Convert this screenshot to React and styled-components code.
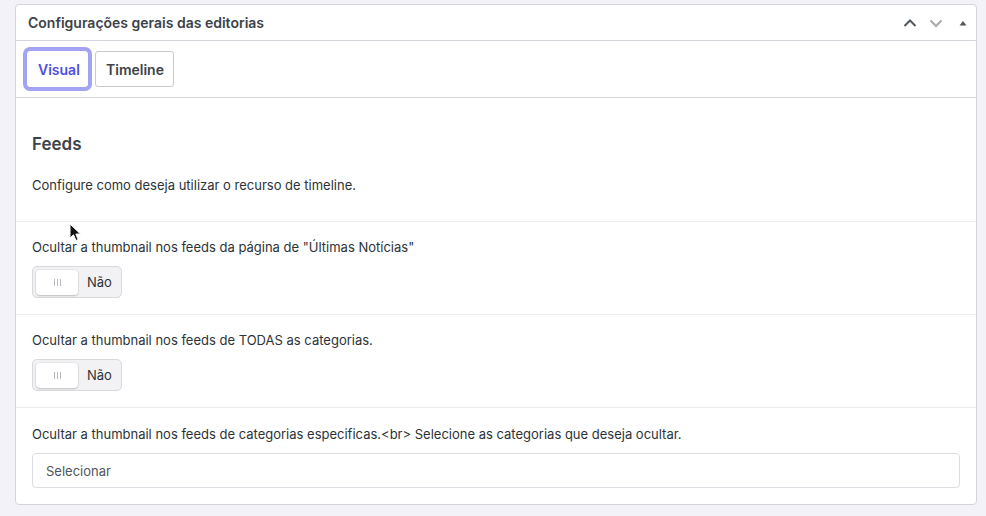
import React from "react";
import styled, { createGlobalStyle } from "styled-components";

const GlobalStyle = createGlobalStyle`
  html, body {
    margin: 0;
    padding: 0;
    background: #f2f2f8;
    font-family: Inter, "Noto Sans", "Liberation Sans", sans-serif;
    -webkit-font-smoothing: antialiased;
  }
`;

const fields = [
  { label: 'Ocultar a thumbnail nos feeds da página de "Últimas Notícias"', kind: "toggle" },
  { label: "Ocultar a thumbnail nos feeds de TODAS as categorias.", kind: "toggle" },
  {
    label:
      "Ocultar a thumbnail nos feeds de categorias especificas.<br> Selecione as categorias que deseja ocultar.",
    kind: "select",
  },
];

const ChevronUp = ({ color }) => (
  <svg width="16" height="16" viewBox="0 0 16 16">
    <path d="M2.5 11 L8 5.5 L13.5 11" fill="none" stroke={color} strokeWidth="2" />
  </svg>
);

const ChevronDown = ({ color }) => (
  <svg width="16" height="16" viewBox="0 0 16 16">
    <path d="M2.5 5.5 L8 11 L13.5 5.5" fill="none" stroke={color} strokeWidth="2" />
  </svg>
);

const Triangle = () => (
  <svg width="10" height="10" viewBox="0 0 10 10">
    <path d="M1.5 7.5 L5 3 L8.5 7.5 Z" fill="#50575e" />
  </svg>
);

const Toggle = () => (
  <ToggleBox>
    <Thumb>
      <Grip />
      <Grip />
      <Grip />
    </Thumb>
    <ToggleText>Não</ToggleText>
  </ToggleBox>
);

const App = () => {
  return (
    <>
      <GlobalStyle />
      <Page>
        <Panel>
          <Header>
            <Title>Configurações gerais das editorias</Title>
            <Actions>
              <ChevronUp color="#50575e" />
              <ChevronDown color="#a7aaad" />
              <Triangle />
            </Actions>
          </Header>
          <TabBar>
            <Tab active>Visual</Tab>
            <Tab>Timeline</Tab>
          </TabBar>
          <Intro>
            <Heading>Feeds</Heading>
            <Description>Configure como deseja utilizar o recurso de timeline.</Description>
          </Intro>
          {fields.map((f) => (
            <Field key={f.label}>
              <Label>{f.label}</Label>
              {f.kind === "toggle" ? <Toggle /> : <Select>Selecionar</Select>}
            </Field>
          ))}
        </Panel>
        <Cursor width="14" height="20" viewBox="0 0 14 20">
          <path
            d="M1 1 L1 15 L4.5 11.8 L7 17.5 L9.2 16.5 L6.8 11 L11.5 11 Z"
            fill="#111"
            stroke="#fff"
            strokeWidth="1"
          />
        </Cursor>
      </Page>
    </>
  );
};

const Page = styled.div`
  position: relative;
  padding: 4px 9px 0 15px;
  height: 512px;
`;

const Panel = styled.div`
  width: 960px;
  background: #fff;
  border: 1px solid #d4d4da;
  border-radius: 4px;
  color: #2c3338;
`;

const Header = styled.div`
  display: flex;
  align-items: center;
  justify-content: space-between;
  height: 35px;
  padding: 0 8px 0 12px;
  border-bottom: 1px solid #d4d4da;
`;

const Title = styled.h2`
  margin: 0;
  font-size: 14px;
  font-weight: 600;
  color: #3c434a;
`;

const Actions = styled.div`
  display: flex;
  align-items: center;
  gap: 10px;

  svg:last-child {
    margin-left: 4px;
  }
`;

const TabBar = styled.div`
  display: flex;
  gap: 3px;
  padding: 10px 8px;
  border-bottom: 1px solid #d4d4da;
`;

const Tab = styled.button`
  height: 36px;
  padding: 0 10px;
  box-sizing: border-box;
  font-family: inherit;
  font-size: 14px;
  font-weight: 600;
  background: #fff;
  border: 1px solid ${(p) => (p.active ? "#fff" : "#c9c9ce")};
  border-radius: 3px;
  color: ${(p) => (p.active ? "#4f4fe0" : "#3c434a")};
  box-shadow: ${(p) => (p.active ? "0 0 0 4px #a3a3f3" : "none")};
  margin-left: ${(p) => (p.active ? "3px" : "0")};
  margin-right: ${(p) => (p.active ? "4px" : "0")};
  width: ${(p) => (p.active ? "61px" : "79px")};
`;

const Intro = styled.div`
  padding: 34px 16px 27px;
  border-bottom: 1px solid #ececf0;
`;

const Heading = styled.h3`
  margin: 0 0 20px;
  font-size: 17px;
  font-weight: 600;
  color: #3c434a;
  line-height: 24px;
`;

const Description = styled.p`
  margin: 0;
  font-size: 13px;
  line-height: 18px;
  color: #2c3338;
`;

const Field = styled.div`
  display: flex;
  flex-direction: column;
  align-items: flex-start;
  gap: 10px;
  padding: 16px;
  border-bottom: 1px solid #ececf0;

  &:last-child {
    border-bottom: none;
    padding-top: 17px;
  }
`;

const Label = styled.div`
  font-size: 13px;
  line-height: 18px;
  color: #2c3338;
`;

const ToggleBox = styled.div`
  display: flex;
  align-items: center;
  gap: 9px;
  width: 90px;
  height: 32px;
  box-sizing: border-box;
  padding: 0 3px;
  background: #f2f2f4;
  border: 1px solid #d8d8dd;
  border-radius: 5px;
`;

const Thumb = styled.div`
  display: flex;
  align-items: center;
  justify-content: center;
  gap: 2px;
  width: 42px;
  height: 25px;
  background: #fff;
  border-radius: 4px;
  box-shadow: 0 1px 2px rgba(0, 0, 0, 0.18), 0 0 0 1px rgba(0, 0, 0, 0.04);
`;

const Grip = styled.span`
  width: 1px;
  height: 7px;
  background: #b8b8be;
`;

const ToggleText = styled.span`
  font-size: 13px;
  color: #2c3338;
`;

const Select = styled.div`
  display: flex;
  align-items: center;
  align-self: stretch;
  height: 35px;
  box-sizing: border-box;
  padding: 0 13px;
  border: 1px solid #dcdce2;
  border-radius: 4px;
  font-size: 13px;
  color: #50575e;
`;

const Cursor = styled.svg`
  position: absolute;
  left: 69px;
  top: 223px;
`;

export default App;
